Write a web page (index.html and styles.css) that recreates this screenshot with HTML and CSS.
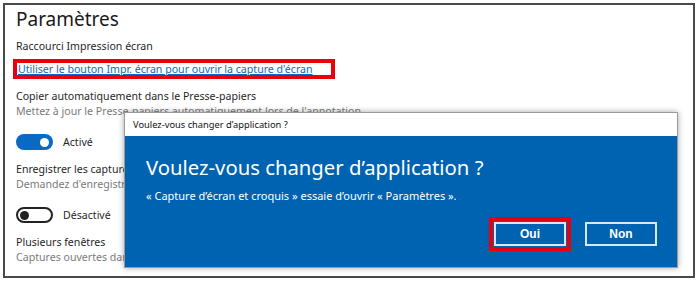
FILE: index.html
```html
<!DOCTYPE html>
<html lang="fr">
<head>
<meta charset="utf-8">
<title>Paramètres</title>
<link rel="stylesheet" href="styles.css">
</head>
<body>
<div class="frame">
  <div class="settings">
    <h1 class="title">Paramètres</h1>
    <div class="label first">Raccourci Impression écran</div>
    <div class="link-box"><a class="link" href="#">Utiliser le bouton Impr. écran pour ouvrir la capture d'écran</a></div>
    <div class="label after-link">Copier automatiquement dans le Presse-papiers</div>
    <div class="desc">Mettez à jour le Presse-papiers automatiquement lors de l'annotation.</div>
    <div class="toggle-row">
      <span class="toggle on"><span class="knob"></span></span>
      <span class="toggle-text">Activé</span>
    </div>
    <div class="label">Enregistrer les captures d'écran</div>
    <div class="desc">Demandez d'enregistrer les modifications avant de fermer la capture.</div>
    <div class="toggle-row">
      <span class="toggle off"><span class="knob"></span></span>
      <span class="toggle-text">Désactivé</span>
    </div>
    <div class="label">Plusieurs fenêtres</div>
    <div class="desc">Captures ouvertes dans plusieurs fenêtres</div>
  </div>

  <div class="dialog">
    <div class="dialog-bar">Voulez-vous changer d’application ?</div>
    <div class="dialog-body">
      <div class="dialog-heading">Voulez-vous changer d’application ?</div>
      <div class="dialog-text">« Capture d’écran et croquis » essaie d’ouvrir « Paramètres ».</div>
      <div class="dialog-actions">
        <button class="btn btn-marked">Oui</button>
        <button class="btn">Non</button>
      </div>
    </div>
  </div>
</div>
</body>
</html>
```
FILE: styles.css
```css
html, body {
  margin: 0;
  padding: 0;
  background: #ffffff;
}
body {
  font-family: "Noto Sans", "Open Sans", sans-serif;
  color: #1a1a1a;
}
.frame {
  position: relative;
  margin: 3px 0 0 3px;
  width: 688px;
  height: 271px;
  border: 2px solid #4a4a4a;
  overflow: hidden;
  background: #fff;
}
.settings {
  display: flex;
  flex-direction: column;
  align-items: flex-start;
  padding: 0 0 0 11px;
}
.title {
  margin: 0;
  font-weight: 400;
  font-size: 19px;
  line-height: 28px;
  color: #1a1a1a;
}
.label {
  font-size: 10.6px;
  line-height: 15px;
  color: #1f1f1f;
}
.label.first {
  margin-top: 6px;
}
.label.after-link {
  margin-top: 10px;
}
.desc {
  font-size: 10.6px;
  line-height: 15px;
  color: #7a7a7a;
}
.link-box {
  margin: 5px 0 0 -3px;
  border: 4px solid #e8000d;
  padding: 0 18px 0 1px;
  height: 12px;
  display: flex;
  align-items: center;
}
.link {
  font-size: 10.6px;
  line-height: 12px;
  color: #0a6ac2;
  text-decoration: underline;
}
.toggle-row {
  display: flex;
  align-items: center;
  gap: 10px;
  margin: 14px 0 11px;
  height: 18px;
}
.toggle {
  box-sizing: border-box;
  width: 37px;
  height: 16px;
  border-radius: 8px;
  display: flex;
  align-items: center;
  padding: 0 4px;
}
.toggle.on {
  background: #0a6ac2;
  justify-content: flex-end;
}
.toggle.off {
  border: 2px solid #222;
  justify-content: flex-start;
  padding: 0 2px;
}
.knob {
  width: 9px;
  height: 9px;
  border-radius: 50%;
}
.toggle.on .knob { background: #fff; }
.toggle.off .knob { background: #222; }
.toggle-text {
  font-size: 10.6px;
  color: #1f1f1f;
}
.dialog {
  position: absolute;
  left: 119px;
  top: 107px;
  width: 552px;
  height: 154px;
  border: 1px solid #9a9a9a;
  box-shadow: 0 0 6px rgba(0, 0, 0, 0.35);
  display: flex;
  flex-direction: column;
  background: #0063b1;
}
.dialog-bar {
  height: 23px;
  background: #fff;
  font-size: 9.3px;
  line-height: 23px;
  padding-left: 8px;
  color: #111;
}
.dialog-body {
  flex: 1;
  background: #0063b1;
  color: #fff;
  padding: 15px 20px 0 21px;
  display: flex;
  flex-direction: column;
}
.dialog-heading {
  font-size: 20.3px;
  line-height: 32px;
}
.dialog-text {
  font-size: 11px;
  line-height: 14px;
  margin-top: 6px;
}
.dialog-actions {
  display: flex;
  justify-content: flex-end;
  gap: 19px;
  margin-top: 19px;
}
.btn {
  width: 72px;
  height: 24px;
  background: #0063b1;
  border: 2px solid #d6e9f8;
  color: #fff;
  font-family: "Liberation Sans", Arial, sans-serif;
  font-weight: 700;
  font-size: 12px;
  padding: 0;
}
.btn-marked {
  outline: 4px solid #e8000d;
  outline-offset: 1px;
}
```
